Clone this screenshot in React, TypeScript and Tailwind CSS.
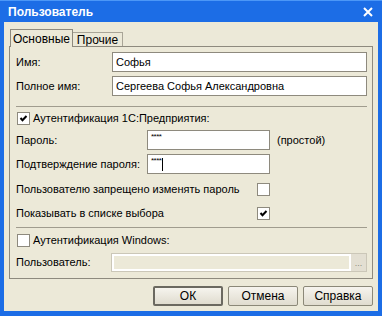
import type { ReactNode } from "react";

const CheckBox = ({ checked }: { checked?: boolean }) => (
  <span className="flex h-[13px] w-[13px] shrink-0 items-center justify-center border border-[#8e8a7e] bg-white">
    {checked && (
      <svg width="9" height="9" viewBox="0 0 9 9">
        <path d="M1.5 4 L3.5 6.2 L7.5 2" fill="none" stroke="#000" strokeWidth="2" />
      </svg>
    )}
  </span>
);

const Field = ({ children, className = "" }: { children?: ReactNode; className?: string }) => (
  <div className={`flex h-[20px] shrink-0 items-center whitespace-nowrap border border-[#8e8a7e] bg-white px-[3px] ${className}`}>
    {children}
  </div>
);

const Stars = ({ caret }: { caret?: boolean }) => (
  <div className="flex h-full items-start pt-[2px]">
    <span className="text-[8px] leading-none tracking-[-0.5px]">****</span>
    {caret && <span className="ml-[1px] mt-[1px] h-[13px] w-[1px] bg-black" />}
  </div>
);

const Button = ({ label, isDefault }: { label: string; isDefault?: boolean }) => (
  <button
    className={`flex h-[20px] w-[70px] items-center justify-center rounded-[2px] bg-gradient-to-b from-[#f6f4ee] to-[#e0dccf] text-[12px] text-black ${
      isDefault ? "border-2 border-[#6b6960]" : "border border-[#8b8878]"
    }`}
  >
    {label}
  </button>
);

export default function App() {
  return (
    <div className="flex h-[316px] w-[382px] flex-col bg-[#1c6de6] font-['Liberation_Sans',Arial,sans-serif] text-[11px] text-black">
      <div className="flex h-[22px] shrink-0 items-center justify-between border-t border-[#4c97f7] pl-[8px] pr-[9px]">
        <span className="text-[12px] font-bold text-white">Пользователь</span>
        <svg width="10" height="10" viewBox="0 0 10 10">
          <path d="M1 1 L9 9 M9 1 L1 9" stroke="#fff" strokeWidth="2" />
        </svg>
      </div>

      <div className="mx-[4px] mb-[5px] flex flex-1 flex-col whitespace-nowrap bg-[#ece9d8] px-[5px] pt-[7px]">
        <div className="flex items-end">
          <div className="relative z-10 -mb-px ml-px flex h-[18px] w-[63px] items-center justify-center border border-b-0 border-[#8e8a7e] bg-[#ece9d8] text-[12px]">
            Основные
          </div>
          <div className="flex h-[14px] w-[50px] items-center justify-center border border-b-0 border-l-0 border-[#a9a597] text-[12px]">
            Прочие
          </div>
        </div>

        <div className="flex h-[233px] flex-col border border-[#8e8a7e] pl-[6px] pr-[5px] pt-[5px]">
          <div className="flex items-center">
            <span className="w-[96px] shrink-0">Имя:</span>
            <Field className="flex-1">Софья</Field>
          </div>
          <div className="mt-[4px] flex items-center">
            <span className="w-[96px] shrink-0">Полное имя:</span>
            <Field className="flex-1">Сергеева Софья Александровна</Field>
          </div>

          <div className="mt-[10px] h-px bg-[#a09c8e]" />

          <div className="mt-[5px] flex items-center gap-[3px] pl-[1px]">
            <CheckBox checked />
            <span className="leading-[13px]">Аутентификация 1С:Предприятия:</span>
          </div>

          <div className="mt-[5px] flex items-center">
            <span className="w-[131px] shrink-0">Пароль:</span>
            <Field className="w-[123px]">
              <Stars />
            </Field>
            <span className="ml-[7px]">(простой)</span>
          </div>
          <div className="mt-[4px] flex items-center">
            <span className="w-[131px] shrink-0">Подтверждение пароля:</span>
            <Field className="w-[123px]">
              <Stars caret />
            </Field>
          </div>

          <div className="mt-[9px] flex h-[13px] items-center">
            <span className="w-[241px] shrink-0">Пользователю запрещено изменять пароль</span>
            <CheckBox />
          </div>
          <div className="mt-[11px] flex h-[13px] items-center">
            <span className="w-[241px] shrink-0">Показывать в списке выбора</span>
            <CheckBox checked />
          </div>

          <div className="mt-[7px] h-px bg-[#a09c8e]" />

          <div className="mt-[6px] flex items-center gap-[3px] pl-[1px]">
            <CheckBox />
            <span className="leading-[13px]">Аутентификация Windows:</span>
          </div>

          <div className="mt-[6px] flex items-center">
            <span className="w-[95px] shrink-0">Пользователь:</span>
            <div className="flex h-[19px] flex-1 border border-[#cbc7b8]">
              <div className="flex-1 border-2 border-white bg-[#ece9d8]" />
              <div className="flex w-[15px] items-end justify-center bg-[#e3dfd2] pb-[3px] text-[9px] leading-none text-[#8e8a7e]">
                ...
              </div>
            </div>
          </div>
        </div>

        <div className="mt-[7px] flex justify-end gap-[5px]">
          <Button label="ОК" isDefault />
          <Button label="Отмена" />
          <Button label="Справка" />
        </div>
      </div>
    </div>
  );
}
